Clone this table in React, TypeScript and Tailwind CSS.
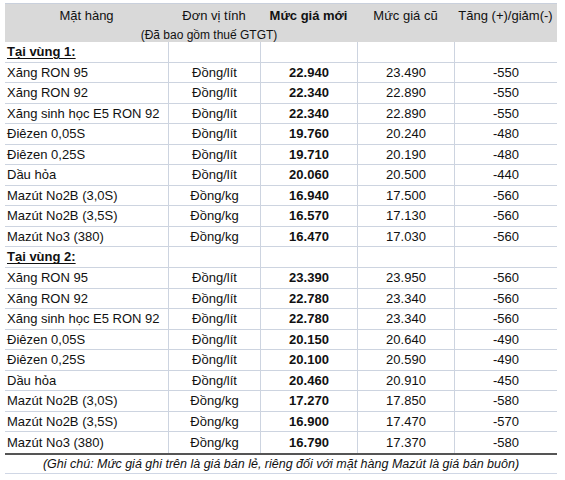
const font = { fontFamily: '"Liberation Sans", Arial, sans-serif' }

type Row = { name: string; unit: string; now: string; old: string; diff: string }

const vung1: Row[] = [
  { name: "Xăng RON 95", unit: "Đồng/lít", now: "22.940", old: "23.490", diff: "-550" },
  { name: "Xăng RON 92", unit: "Đồng/lít", now: "22.340", old: "22.890", diff: "-550" },
  { name: "Xăng sinh học E5 RON 92", unit: "Đồng/lít", now: "22.340", old: "22.890", diff: "-550" },
  { name: "Điêzen 0,05S", unit: "Đồng/lít", now: "19.760", old: "20.240", diff: "-480" },
  { name: "Điêzen 0,25S", unit: "Đồng/lít", now: "19.710", old: "20.190", diff: "-480" },
  { name: "Dầu hỏa", unit: "Đồng/lít", now: "20.060", old: "20.500", diff: "-440" },
  { name: "Mazút No2B (3,0S)", unit: "Đồng/kg", now: "16.940", old: "17.500", diff: "-560" },
  { name: "Mazút No2B (3,5S)", unit: "Đồng/kg", now: "16.570", old: "17.130", diff: "-560" },
  { name: "Mazút No3 (380)", unit: "Đồng/kg", now: "16.470", old: "17.030", diff: "-560" },
]

const vung2: Row[] = [
  { name: "Xăng RON 95", unit: "Đồng/lít", now: "23.390", old: "23.950", diff: "-560" },
  { name: "Xăng RON 92", unit: "Đồng/lít", now: "22.780", old: "23.340", diff: "-560" },
  { name: "Xăng sinh học E5 RON 92", unit: "Đồng/lít", now: "22.780", old: "23.340", diff: "-560" },
  { name: "Điêzen 0,05S", unit: "Đồng/lít", now: "20.150", old: "20.640", diff: "-490" },
  { name: "Điêzen 0,25S", unit: "Đồng/lít", now: "20.100", old: "20.590", diff: "-490" },
  { name: "Dầu hỏa", unit: "Đồng/lít", now: "20.460", old: "20.910", diff: "-450" },
  { name: "Mazút No2B (3,0S)", unit: "Đồng/kg", now: "17.270", old: "17.850", diff: "-580" },
  { name: "Mazút No2B (3,5S)", unit: "Đồng/kg", now: "16.900", old: "17.470", diff: "-570" },
  { name: "Mazút No3 (380)", unit: "Đồng/kg", now: "16.790", old: "17.370", diff: "-580" },
]

const cols = "grid grid-cols-[163px_92px_97px_97px_103px]"
const cell = "flex items-center justify-center border-l border-[#cdd4e0]"

function DataRow({ r, last }: { r: Row; last?: boolean }) {
  return (
    <div className={`${cols} h-[20.55px] ${last ? "" : "border-b border-[#cdd4e0]"}`}>
      <div className="flex items-center pl-[2px]">{r.name}</div>
      <div className={cell}>{r.unit}</div>
      <div className={`${cell} font-bold`}>{r.now}</div>
      <div className={cell}>{r.old}</div>
      <div className={cell}>{r.diff}</div>
    </div>
  )
}

function RegionRow({ title }: { title: string }) {
  return (
    <div className={`${cols} h-[20.55px] border-b border-[#cdd4e0]`}>
      <div className="flex items-center pl-[2px] font-bold underline underline-offset-2">{title}</div>
      <div className={cell}></div>
      <div className={cell}></div>
      <div className={cell}></div>
      <div className={cell}></div>
    </div>
  )
}

export default function App() {
  return (
    <div className="w-[565px] h-[480px] bg-white text-[13px] text-[#111] pt-[3px] pl-[5px]" style={font}>
      <div className="w-[552px]">
        {/* header */}
        <div className="h-[39px] bg-[#d9d9d9] border-t border-[#c9d0dc]">
          <div className={`${cols} h-[22px] items-end pb-[1px]`}>
            <div className="text-center">Mặt hàng</div>
            <div className="text-center">Đơn vị tính</div>
            <div className="text-center font-bold">Mức giá mới</div>
            <div className="text-center">Mức giá cũ</div>
            <div className="text-center whitespace-nowrap">Tăng (+)/giảm(-)</div>
          </div>
          <div className={`${cols} h-[16px] items-center`}>
            <div></div>
            <div className="flex justify-center whitespace-nowrap text-[12px] pr-[10px]">(Đã bao gồm thuế GTGT)</div>
          </div>
        </div>

        <RegionRow title="Tại vùng 1:" />
        {vung1.map((r) => (
          <DataRow key={"a" + r.name} r={r} />
        ))}
        <RegionRow title="Tại vùng 2:" />
        {vung2.map((r, i) => (
          <DataRow key={"b" + r.name} r={r} last={i === vung2.length - 1} />
        ))}

        <div className="border-t-2 border-[#555] h-[21px] border-b border-b-[#d0d7e5] flex items-center justify-center italic text-[12.5px]">
          (Ghi chú: Mức giá ghi trên là giá bán lẻ, riêng đối với mặt hàng Mazút là giá bán buôn)
        </div>
      </div>
    </div>
  )
}
